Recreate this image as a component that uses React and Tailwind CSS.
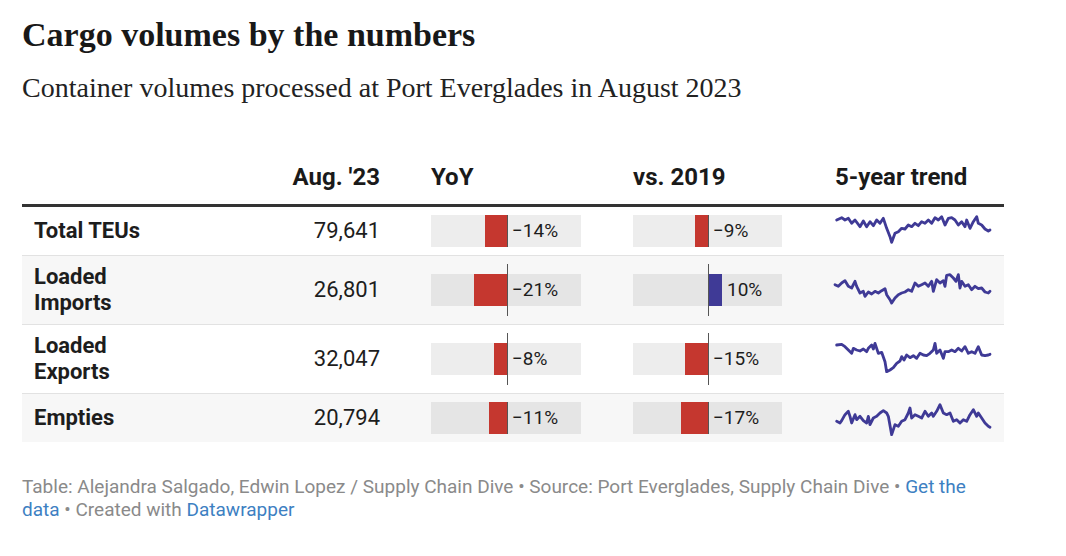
import React from "react";

const rows = [
  {
    label: ["Total TEUs"],
    value: "79,641",
    yoy: -14,
    yoyW: 22,
    vs: -9,
    vsW: 13,
    dy: -18,
    pts: "20,45 35,38 45,45 55,40 65,55 75,45 90,65 100,48 110,65 120,50 130,62 140,45 150,55 160,40 170,70 180,95 185,112 195,85 205,80 215,70 225,72 235,60 245,65 255,55 265,62 275,50 285,55 295,45 305,55 315,38 325,45 335,35 345,60 355,40 365,38 375,45 385,60 395,50 405,65 410,45 420,70 430,50 440,35 445,55 455,60 465,72 475,78 480,75",
  },
  {
    label: ["Loaded", "Imports"],
    value: "26,801",
    yoy: -21,
    yoyW: 33,
    vs: 10,
    vsW: 14,
    dy: -6,
    alt: true,
    pts: "15,50 25,55 35,45 45,38 55,55 65,60 75,40 80,55 90,75 100,70 105,85 115,72 125,78 135,70 145,75 155,68 165,62 170,80 180,95 185,105 195,90 205,80 215,75 225,72 235,65 245,70 255,45 265,55 275,50 285,45 295,55 305,40 310,70 320,35 330,45 340,38 345,55 350,22 360,20 370,30 378,40 385,20 390,60 395,40 405,55 415,50 425,65 435,55 445,62 455,60 465,72 475,75 480,70",
  },
  {
    label: ["Loaded", "Exports"],
    value: "32,047",
    yoy: -8,
    yoyW: 13,
    vs: -15,
    vsW: 23,
    dy: -12,
    pts: "20,30 35,28 45,35 55,45 65,55 70,40 80,45 90,48 100,42 110,50 115,40 125,30 130,42 135,25 145,55 155,52 165,80 170,110 180,105 190,98 200,85 210,78 215,65 222,75 230,60 240,68 250,62 260,70 270,55 280,60 290,62 300,55 310,45 315,25 320,55 330,45 340,70 345,50 355,50 365,45 375,50 385,40 395,48 405,35 415,55 425,50 435,55 445,35 455,60 465,62 475,60 480,58",
  },
  {
    label: ["Empties"],
    value: "20,794",
    yoy: -11,
    yoyW: 18,
    vs: -17,
    vsW: 27,
    dy: 0,
    alt: true,
    pts: "20,70 30,75 35,68 45,50 55,40 60,55 65,75 75,50 80,65 90,55 100,68 110,75 115,55 120,80 130,60 140,55 150,45 160,38 170,45 175,55 185,110 195,80 205,85 215,70 225,65 235,45 240,30 245,60 255,50 265,55 275,60 285,40 295,55 305,45 310,55 320,40 330,20 340,45 350,50 360,45 370,70 380,65 390,75 400,65 410,70 420,50 430,35 440,55 445,45 455,60 465,75 475,85 480,88",
  },
];

function fmt(v) {
  return v < 0 ? "\u2212" + Math.abs(v) + "%" : v + "%";
}

function Bar({ value, w, axis, width }) {
  const neg = value < 0;
  return (
    <div className="relative h-full flex items-center">
      <div
        className="relative h-[32px] bg-black/[0.07]"
        style={{ width: width }}
      >
        {neg ? (
          <div
            className="absolute top-0 bottom-0 bg-[#c5372f]"
            style={{ left: axis - w, width: w }}
          />
        ) : (
          <div
            className="absolute top-0 bottom-0 bg-[#3f3a96]"
            style={{ left: axis, width: w }}
          />
        )}
        <div
          className="absolute top-0 bottom-0 flex items-center text-[19px] text-[#1d1d1d]"
          style={{ left: axis + (neg ? 5 : w + 5) }}
        >
          {fmt(value)}
        </div>
      </div>
      <div
        className="absolute top-0 bottom-0 w-px bg-[#555]"
        style={{ left: axis }}
      />
    </div>
  );
}

const cols = "grid grid-cols-[238px_120px_253px_197px_1fr]";

export default function App() {
  return (
    <div className="w-[1066px] h-[556px] bg-white pl-[22px] pt-[15px] font-['Roboto',sans-serif] text-[#1d1d1d]">
      <h1 className="font-['Liberation_Serif',serif] font-bold text-[34px] leading-[40px] text-[#181818]">
        Cargo volumes by the numbers
      </h1>
      <p className="mt-[16px] font-['Liberation_Serif',serif] text-[28px] leading-[34px] text-[#222]">
        Container volumes processed at Port Everglades in August 2023
      </p>

      <div className="mt-[44px] w-[982px]">
        <div className={cols + " h-[58px] items-end pb-[13px] border-b-[3px] border-[#333] text-[24px] font-bold leading-[28px] text-[#1a1a1a]"}>
          <div />
          <div className="text-right">Aug. '23</div>
          <div className="pl-[51px]">YoY</div>
          <div>vs. 2019</div>
          <div className="pl-[5px]">5-year trend</div>
        </div>
        {rows.map((r, i) => (
          <div
            key={i}
            className={
              cols +
              " " +
              (r.alt ? "bg-[#f7f7f7]" : "bg-white") +
              (i < rows.length - 1 ? " border-b border-[#e2e2e2]" : "")
            }
          >
            <div className="py-[8px] pl-[12px] flex flex-col justify-center text-[22px] font-bold leading-[26px]">
              {r.label.map((l) => (
                <div key={l}>{l}</div>
              ))}
            </div>
            <div className="flex items-center justify-end text-[22px] leading-[26px]">
              {r.value}
            </div>
            <div className="pl-[51px] py-[8px]">
              <Bar value={r.yoy} w={r.yoyW} axis={76} width={150} />
            </div>
            <div className="py-[8px]">
              <Bar value={r.vs} w={r.vsW} axis={75} width={149} />
            </div>
            <div className="flex items-center">
              <svg
                width="170"
                height="40"
                viewBox="0 0 510 120"
                className="overflow-visible"
              >
                <polyline
                  points={r.pts}
                  transform={`translate(0,${r.dy})`}
                  fill="none"
                  stroke="#3f3a96"
                  strokeWidth="8.5"
                  strokeLinejoin="round"
                  strokeLinecap="round"
                />
              </svg>
            </div>
          </div>
        ))}
      </div>

      <div className="mt-[33px] w-[985px] text-[19px] leading-[23px] text-[#8a8a8a]">
        <div>
          Table: Alejandra Salgado, Edwin Lopez / Supply Chain Dive • Source: Port Everglades, Supply Chain Dive •{" "}
          <span className="text-[#3d80c2]">Get the</span>
        </div>
        <div>
          <span className="text-[#3d80c2]">data</span> • Created with{" "}
          <span className="text-[#3d80c2]">Datawrapper</span>
        </div>
      </div>
    </div>
  );
}
